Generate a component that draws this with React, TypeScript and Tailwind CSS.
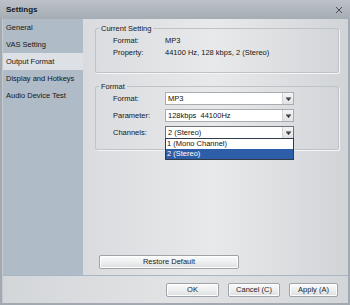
import React from 'react';

const navItems = ['General', 'VAS Setting', 'Output Format', 'Display and Hotkeys', 'Audio Device Test'];

const Combo: React.FC<{ value: string; open?: boolean }> = ({ value, open }) => (
  <div className="relative w-[129px]">
    <div className={`flex h-[13px] items-stretch border bg-white ${open ? 'border-[#6d7378]' : 'border-[#a9adb2]'}`}>
      <span className="flex-1 whitespace-pre pl-[2px] leading-[11px] text-[#111]">{value}</span>
      <span className="flex w-[11px] items-center justify-center border-l border-[#d0d3d6] bg-linear-to-b from-[#f4f5f6] to-[#dfe1e4]">
        <svg width="5" height="4" viewBox="0 0 5 4">
          <path d="M0 0.5h5v1h-5z" fill="#222" />
          <path d="M0.5 1.5h4L2.5 4z" fill="#222" />
        </svg>
      </span>
    </div>
    {open && (
      <div className="absolute left-0 top-[12px] z-10 w-[129px] border border-[#303b4a] bg-white">
        <div className="h-[10px] pl-[1px] leading-[10px] text-[#111]">1 (Mono Channel)</div>
        <div className="h-[10px] bg-[#2f5ea8] pl-[1px] leading-[10px] text-white">2 (Stereo)</div>
      </div>
    )}
  </div>
);

const Btn: React.FC<{ label: string; w: string }> = ({ label, w }) => (
  <button
    type="button"
    className={`${w} h-[14px] rounded-[2px] border border-[#9ea3a8] bg-linear-to-b from-[#fbfbfc] via-[#eeeff0] to-[#dcdee1] text-[7.5px] leading-[12px] text-[#1c1c1c] shadow-[inset_0_0_0_1px_#ffffff]`}
  >
    {label}
  </button>
);

export default function App() {
  return (
    <div className="flex h-[305px] w-[350px] flex-col bg-[#a2a9b0] px-[2px] pb-[2px] font-['Liberation_Sans',Arial,sans-serif] text-[7.5px] text-[#161616]">
      {/* title bar */}
      <div className="-mx-[2px] flex h-[19px] items-center justify-between bg-linear-to-b from-[#bcc2c8] to-[#a5acb3] pl-[6px] pr-[6px]">
        <span className="text-[8px] font-bold text-[#15191d]">Settings</span>
        <svg width="8" height="8" viewBox="0 0 8 8" className="mr-[1px]">
          <path d="M1 1L7 7M7 1L1 7" stroke="#4a4f55" strokeWidth="1" />
        </svg>
      </div>

      <div className="flex flex-1 flex-col border-l border-[#c4c9ce]">
        <div className="flex h-[256px]">
          {/* sidebar */}
          <div className="flex w-[80px] flex-col bg-[#afbbc7]">
            {navItems.map((item) => (
              <div
                key={item}
                className={`flex h-[17px] items-center pl-[3px] ${item === 'Output Format' ? 'bg-[#dde0e4]' : ''}`}
              >
                {item}
              </div>
            ))}
          </div>

          {/* content */}
          <div className="flex flex-1 flex-col bg-linear-to-r from-[#d9dbde] via-[#e8e9eb] to-[#d1d4d7] pl-[12px] pr-[9px] pt-[5px]">
            <fieldset className="h-[49px] rounded-[2px] border border-[#bfc3c7] shadow-[1px_1px_0_#f4f5f6]">
              <legend className="ml-[3px] px-[2px] leading-[9px]">Current Setting</legend>
              <div className="flex flex-col gap-[3px] pl-[17px] pt-[3px]">
                <div className="flex h-[9px] items-center">
                  <span className="w-[52px]">Format:</span>
                  <span>MP3</span>
                </div>
                <div className="flex h-[9px] items-center">
                  <span className="w-[52px]">Property:</span>
                  <span>44100 Hz, 128 kbps, 2 (Stereo)</span>
                </div>
              </div>
            </fieldset>

            <fieldset className="mt-[9px] h-[68px] rounded-[2px] border border-[#bfc3c7] shadow-[1px_1px_0_#f4f5f6]">
              <legend className="ml-[3px] px-[2px] leading-[9px]">Format</legend>
              <div className="flex flex-col gap-[4px] pl-[17px] pt-[1px]">
                <div className="flex items-center">
                  <span className="w-[52px]">Format:</span>
                  <Combo value="MP3" />
                </div>
                <div className="flex items-center">
                  <span className="w-[52px]">Parameter:</span>
                  <Combo value="128kbps  44100Hz" />
                </div>
                <div className="flex items-center">
                  <span className="w-[52px]">Channels:</span>
                  <Combo value="2 (Stereo)" open />
                </div>
              </div>
            </fieldset>

            <div className="mt-auto mb-[6px] pl-[4px]">
              <Btn label="Restore Default" w="w-[140px]" />
            </div>
          </div>
        </div>

        {/* bottom bar */}
        <div className="flex flex-1 items-start justify-end gap-[9px] border-t border-[#a8b6c5] bg-linear-to-r from-[#d3d6d9] via-[#e2e3e5] to-[#d3d6d9] pr-[10px] pt-[7px]">
          <Btn label="OK" w="w-[53px]" />
          <Btn label="Cancel (C)" w="w-[52px]" />
          <Btn label="Apply (A)" w="w-[49px]" />
        </div>
      </div>
    </div>
  );
}
